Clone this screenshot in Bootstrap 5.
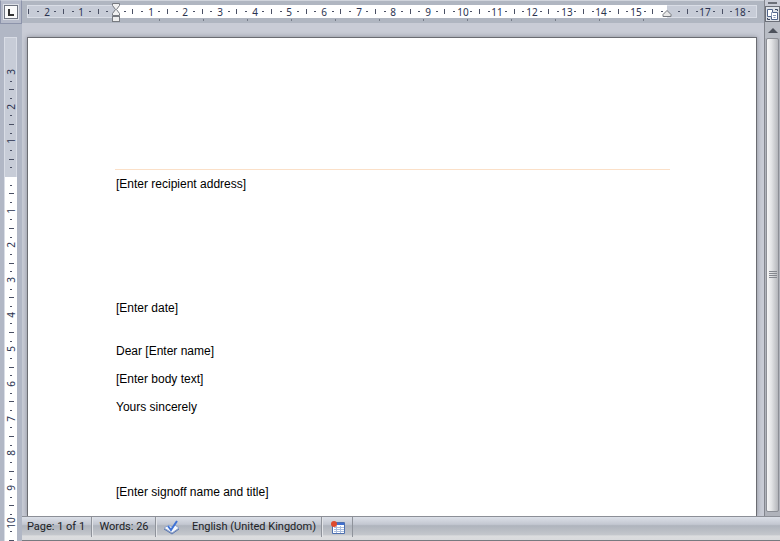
<!DOCTYPE html>
<html lang="en-GB">
<head>
<meta charset="utf-8">
<meta name="viewport" content="width=device-width, initial-scale=1">
<title>Letter template</title>
<link href="https://cdn.jsdelivr.net/npm/bootstrap@5.3.0/dist/css/bootstrap.min.css" rel="stylesheet">
<style>
body { background: #c9ccd6; color: #000; overflow: hidden; }
button { border: 0; padding: 0; background: none; border-radius: 0; }
svg { display: block; }
.side { width: 22px; background: #b1b7c5; }
.corner { height: 24px; background: #b6bbca; border: 1px solid #8d94ab; border-top-color: #c5cad6; }
.tabstop { width: 14px; height: 14px; background: #fafafa; border: 1px solid #6f7480; outline: 1px solid #dfe2e8; }
.hruler { height: 23px; background: #b0b6c1; border-top: 1px solid #d0d4dc; }
.ruler text { font: 10px "Noto Sans", sans-serif; fill: #2b3350; text-anchor: middle; }
.ruler .tick { fill: #4a5064; }
.sheet { background: #fff; border: 1px solid #6b6c72; border-bottom: 0; margin: 14px 7px 0 5px; padding: 131px 86px 0 87px; box-shadow: 0 0 5px #8b8e99; }
.letter { font: 12px/18px "Liberation Sans", Arial, sans-serif; border-top: 1px solid #fbe0c8; padding: 5px 1px 0; }
.letter p { margin: 0; }
.letter .date { margin-top: 106px; }
.letter .greeting { margin-top: 25px; }
.letter .para { margin-top: 10px; }
.letter .signoff { margin-top: 67px; }
.strip { width: 16px; background: #b0b3bb; border-left: 1px solid #83868e; }
.split { height: 6px; background: #c9ccd6; }
.split span { width: 9px; height: 2px; background: #6b6f78; }
.toggle { height: 16px; background: #dde1e7; border: 1px solid #6b6f78; }
.arrow { height: 16px; background: #b9bdc5; }
.thumb { background: linear-gradient(90deg, #f6f6f7, #e3e4e6 40%, #b4b6bb); border: 1px solid #8c8f96; border-radius: 2px; margin: 0 1px 4px; }
.status { height: 25px; margin-left: -1px; border-top: 1px solid #8c8f97; border-bottom: 1px solid #777a80; font: 11px/16px Roboto, sans-serif; color: #202226;
  background: linear-gradient(#dce0e8 0, #c3c7d1 32%, #afb4bd 38%, #c4c7cc 78%, #dcdddf 82%, #d9dadd 100%); }
.status button { height: 20px; color: inherit; border-right: 1px solid #8f939b; white-space: nowrap; }
.status button + button { border-left: 1px solid #e2e4e8; }
.status .pagecount { width: 71px; }
.status .words { width: 64px; }
.status .proof { width: 30px; border-right: 0; }
.status .lang { width: 136px; padding-left: 1px; border-left: 0; }
.status .macro { width: 31px; }
</style>
<script src="https://cdn.jsdelivr.net/npm/bootstrap@5.3.0/dist/js/bootstrap.bundle.min.js"></script>
</head>
<body>
<div class="d-flex vh-100">
  <aside class="side d-flex flex-column flex-shrink-0 overflow-hidden">
    <div class="corner d-flex align-items-center justify-content-center flex-shrink-0">
      <button class="tabstop" aria-label="Left tab"><svg width="12" height="12"><path d="M4 3v6h5" fill="none" stroke="#333" stroke-width="2"/></svg></button>
    </div>
    <svg class="ruler flex-grow-1" id="vruler" width="22" aria-label="Vertical ruler"></svg>
  </aside>
  <div class="d-flex flex-column flex-grow-1 overflow-hidden">
    <div class="d-flex flex-grow-1 overflow-hidden">
      <main class="d-flex flex-column flex-grow-1 overflow-hidden">
        <div class="hruler flex-shrink-0"><svg class="ruler w-100" id="hruler" height="22" aria-label="Horizontal ruler"></svg></div>
        <div class="sheet flex-grow-1">
          <article class="letter">
            <p>[Enter recipient address]</p>
            <p class="date">[Enter date]</p>
            <p class="greeting">Dear [Enter name]</p>
            <p class="para">[Enter body text]</p>
            <p class="para">Yours sincerely</p>
            <p class="signoff">[Enter signoff name and title]</p>
          </article>
        </div>
      </main>
      <div class="strip d-flex flex-column flex-shrink-0">
        <div class="split d-flex align-items-center justify-content-center flex-shrink-0"><span></span></div>
        <button class="toggle d-flex align-items-center justify-content-center flex-shrink-0" aria-label="View ruler">
          <svg width="13" height="13"><path d="M1.500 1.500h5v3h5v7h-6v-3h-4z" fill="#fff" stroke="#50648a"/><path d="M5.500 8V4.500H7M7 7.500h3M9.500 9.500h-2" fill="none" stroke="#8797b5"/><path d="M9 1.500h2.500V3M1.500 10v1.500H4" fill="none" stroke="#39455f"/></svg>
        </button>
        <button class="arrow d-flex align-items-center justify-content-center flex-shrink-0" aria-label="Scroll up"><svg width="10" height="6"><path d="M5 1l5 5H0z" fill="#4c515b"/></svg></button>
        <div class="thumb flex-grow-1 d-flex align-items-center justify-content-center"><svg width="8" height="8"><path d="M0 .5h8M0 2.5h8M0 4.5h8M0 6.5h8" stroke="#85888f"/></svg></div>
      </div>
    </div>
    <footer class="status d-flex flex-shrink-0">
      <button class="pagecount">Page: 1 of 1</button>
      <button class="words">Words: 26</button>
      <button class="proof d-flex align-items-center justify-content-center" aria-label="Proofing"><svg width="17" height="15"><path d="M1 8l5-3 3 2 3-2 4 3-7 5z" fill="#f5f8fd" stroke="#8fa3c8"/><path d="M1 9l8 5 7-5" fill="none" stroke="#5b78b4"/><path d="M5 6l3 4 6-9" fill="none" stroke="#3f73d6" stroke-width="2"/></svg></button>
      <button class="lang">English (United Kingdom)</button>
      <button class="macro d-flex align-items-center justify-content-center" aria-label="Record macro"><svg width="14" height="13"><path d="M1.500 1.500h12v11h-12z" fill="#fff" stroke="#4d6fae"/><path d="M2 2h11v2H2z" fill="#3f6fd0"/><path d="M3 6.500h10M3 8.500h10M3 10.500h10M5.500 5v7M9.500 5v7" stroke="#a9bddf"/><circle cx="3" cy="3" r="3" fill="#de4a2e"/></svg></button>
    </footer>
  </div>
</div>
<script>
const CM = 34.67;
const rect = (x, y, w, h, extra) => `<rect x="${x}" y="${y}" width="${w}" height="${h}" ${extra}/>`;

// Marks along one ruler: a number at each centimetre, a tick at the half, dots at the quarters.
function marks(zero, from, to, skip, place) {
  let out = '';
  for (let q = from; q <= to; q++) {
    const pos = Math.round(zero + q * CM / 4), n = Math.abs(q / 4);
    if (skip.includes(q)) continue;
    out += place(pos, q % 4 === 0 ? 'num' : q % 2 === 0 ? 'tick' : 'dot', n);
  }
  return out;
}

function drawHorizontal() {
  const el = document.getElementById('hruler'), w = el.clientWidth, start = 94, end = w - 97;
  let s = rect(5.5, 4.5, w - 13, 12, 'fill="#c7ccd7" stroke="#d9dde6"');
  s += rect(start, 4, end - start, 13, 'fill="#fff"');
  s += marks(start, -10, 73, [0, 64], (p, kind, n) =>
    kind === 'num' ? `<text x="${p}" y="15">${n}</text>` :
    kind === 'tick' ? rect(p - 1, 8, 1, 5, 'class="tick"') : rect(p - 1, 10, 2, 1, 'class="tick"'));
  for (let x = start + 44; x < end; x += 44) s += rect(x - 1, 18, 1, 2, 'fill="#767c88"');
  s += `<path d="M${start - 3.5} 2.500h7v2l-3 4 3 4v2h-7v-2l3-4-3-4z" fill="#f1f1f1" stroke="#777a80"/>`;
  s += rect(start - 3.5, 15.5, 7, 5, 'fill="#eee" stroke="#777a80"');
  s += `<path d="M${end - 4} 15.500v-2l4-4 4 4v2z" fill="#e8e8e8" stroke="#777a80"/>`;
  el.innerHTML = s;
}

function drawVertical() {
  const el = document.getElementById('vruler'), h = el.clientHeight, zero = 152;
  let s = rect(4.5, 13.5, 12, h, 'fill="#c7ccd7" stroke="#d9dde6"');
  s += rect(5, zero + 1, 12, h, 'fill="#fff"');
  s += marks(zero, -12, 42, [0], (p, kind, n) =>
    kind === 'num' ? `<text transform="translate(15 ${p}) rotate(-90)">${n}</text>` :
    kind === 'tick' ? rect(9, p, 5, 1, 'class="tick"') : rect(10, p, 2, 1, 'class="tick"'));
  el.innerHTML = s;
}

function draw() { drawHorizontal(); drawVertical(); }
draw();
addEventListener('resize', draw);
</script>
</body>
</html>
